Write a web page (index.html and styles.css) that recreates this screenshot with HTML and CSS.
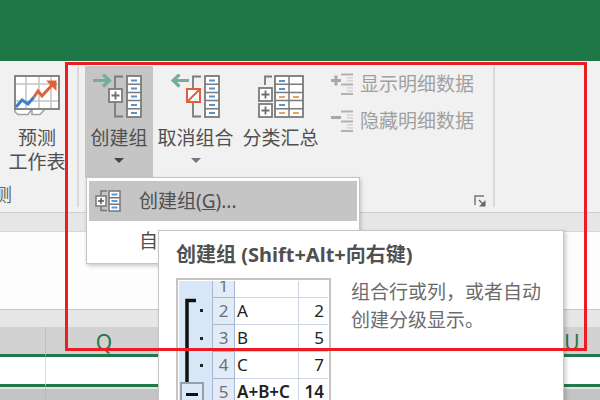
FILE: index.html
```html
<!DOCTYPE html>
<html lang="zh-CN">
<head>
    <meta charset="UTF-8">
    <meta name="viewport" content="width=device-width, initial-scale=1.0">
    <title>创建组</title>
    <link rel="stylesheet" href="styles.css">
</head>
<body>

<svg class="defs" width="0" height="0">
    <defs>
        <g id="list">
            <path d="M22 17V2.500H30M22 29V42.500H30" fill="none" stroke="#7a7a7a" stroke-width="1.800"/>
            <rect x="34" y="2" width="14" height="41" fill="#fff" stroke="#7a7a7a" stroke-width="1.800"/>
            <path d="M34 10.200H48M34 18.400H48M34 26.600H48M34 34.800H48" stroke="#7a7a7a" stroke-width="1.500"/>
            <path d="M38 6.500H44M38 14.500H44M38 22.500H44M38 31H44M38 39H44" stroke="#5a90cc" stroke-width="2"/>
        </g>
        <g id="plus">
            <rect x="1" y="1" width="13" height="13" fill="#fff" stroke="#7a7a7a" stroke-width="1.800"/>
            <path d="M3.500 7.500H11.500M7.500 3.500V11.500" stroke="#6e6e6e" stroke-width="1.800"/>
        </g>
        <g id="rows">
            <path d="M10 1.500H22M10 11.500H22M10 21H22" stroke="#b4b0b4" stroke-width="2"/>
            <path d="M16 5H22M16 8H22M16 15H22M16 18H22" stroke="#d6d0d6" stroke-width="1.500"/>
        </g>
    </defs>
</svg>

<header class="titlebar"></header>

<div class="ribbon">
    <section class="group forecast">
        <button class="big">
            <svg width="46" height="44" viewBox="0 0 46 44">
                <path d="M1 34V38L4 40.500H14L18 35M18 35V40.500H26L32 34" fill="#fff" stroke="#a0a0a0" stroke-width="1.500"/>
                <rect x="1" y="2" width="44" height="33" fill="#fff" stroke="#7a7a7a" stroke-width="1.800"/>
                <path d="M12 3V34M25 3V34M37 3V34M2 10H44M2 27H44" stroke="#c4c4c4" stroke-width="1.500"/>
                <path d="M2 33L8 26L14 30L20 23" fill="none" stroke="#3f7fc4" stroke-width="3"/>
                <path d="M20 23L24 17L28 22L39 10" fill="none" stroke="#dc6238" stroke-width="3"/>
                <path d="M32 6.500H42.500V17L38.500 13L35 9.500Z" fill="#dc6238"/>
            </svg>
            <span class="label">预测<br>工作表</span>
        </button>
        <div class="group-name">预测</div>
    </section>

    <section class="group outline">
        <div class="dropdown">
            <button class="big active">
                <svg width="52" height="44" viewBox="0 0 52 44">
                    <use href="#list"/>
                    <path d="M0 6.500H15M10 0.500L16.500 6.500L10 12.500" fill="none" stroke="#74ad98" stroke-width="3.200"/>
                    <use href="#plus" x="15" y="14"/>
                </svg>
                <span class="label">创建组</span>
                <span class="caret"></span>
            </button>
            <div class="menu">
                <button class="menu-item selected">
                    <svg width="26" height="22" viewBox="0 0 26 22">
                        <path d="M6 7V1H12M6 16V20.500H12" fill="none" stroke="#777" stroke-width="1.500"/>
                        <rect x="14" y="1" width="11" height="20" fill="#fff" stroke="#777" stroke-width="1.500"/>
                        <path d="M14 7.700H25M14 14.300H25" stroke="#777" stroke-width="1.500"/>
                        <path d="M16.500 4.500H22.500M16.500 11H22.500M16.500 17.500H22.500" stroke="#5b9bd5" stroke-width="2"/>
                        <rect x="1" y="6" width="10" height="10" fill="#fff" stroke="#777" stroke-width="1.500"/>
                        <path d="M3 11H9M6 8V14" stroke="#555" stroke-width="1.500"/>
                    </svg>
                    <span>创建组(<u>G</u>)...</span>
                </button>
                <button class="menu-item">
                    <svg width="26" height="22"></svg>
                    <span>自动建立分级显示(<u>A</u>)</span>
                </button>
                <div class="tooltip">
                    <h2>创建组 (Shift+Alt+向右键)</h2>
                    <div class="tooltip-body">
                        <div class="sample">
                            <svg width="33" height="124" viewBox="0 0 33 124">
                                <path d="M17 19.500H8V101" fill="none" stroke="#111" stroke-width="3.500"/>
                                <rect x="21" y="28" width="3" height="3" fill="#222"/>
                                <rect x="21" y="56" width="3" height="3" fill="#222"/>
                                <rect x="21" y="83" width="3" height="3" fill="#222"/>
                                <rect x="2" y="102" width="22" height="24" fill="#dce9f8" stroke="#9a9fa8" stroke-width="2"/>
                                <path d="M7 113.500H19" stroke="#111" stroke-width="3"/>
                            </svg>
                            <table>
                                <tr class="cut"><th><div>1</div></th><td></td><td></td></tr>
                                <tr><th>2</th><td>A</td><td class="num">2</td></tr>
                                <tr><th>3</th><td>B</td><td class="num">5</td></tr>
                                <tr><th>4</th><td>C</td><td class="num">7</td></tr>
                                <tr class="total"><th>5</th><td>A+B+C</td><td class="num">14</td></tr>
                            </table>
                        </div>
                        <p>组合行或列，或者自动创建分级显示。</p>
                    </div>
                </div>
            </div>
        </div>
        <button class="big wide">
            <svg width="50" height="44" viewBox="0 0 50 44">
                <use href="#list"/>
                <path d="M18 6.500H2M8.500 0.500L2 6.500L8.500 12.500" fill="none" stroke="#74ad98" stroke-width="3.200"/>
                <rect x="16" y="15" width="13" height="13" fill="#fff" stroke="#dc6238" stroke-width="2"/>
                <path d="M16 28L29 15" stroke="#dc6238" stroke-width="2"/>
            </svg>
            <span class="label">取消组合</span>
            <span class="caret light"></span>
        </button>
        <button class="big wide">
            <svg width="48" height="44" viewBox="0 0 48 44">
                <path d="M8 11V2.500H15" fill="none" stroke="#7a7a7a" stroke-width="1.800"/>
                <rect x="18" y="2" width="28" height="41" fill="#fff" stroke="#7a7a7a" stroke-width="1.800"/>
                <path d="M18 10.200H46M18 18.400H46M18 26.600H46M18 34.800H46M32 2V43" stroke="#7a7a7a" stroke-width="1.500"/>
                <path d="M22 7H28M22 15H28M22 31H28" stroke="#5a90cc" stroke-width="2"/>
                <path d="M22 23H28M36 23H42M22 39H28M36 39H42" stroke="#eb9f60" stroke-width="2"/>
                <use href="#plus" x="1" y="13"/>
                <use href="#plus" x="1" y="29"/>
            </svg>
            <span class="label">分类汇总</span>
        </button>
        <div class="small-buttons">
            <button disabled>
                <svg width="22" height="23" viewBox="0 0 22 23">
                    <use href="#rows"/>
                    <path d="M0 7.500H10M5 2.500V12.500" stroke="#a9a5a9" stroke-width="3"/>
                </svg>
                显示明细数据
            </button>
            <button disabled>
                <svg width="22" height="23" viewBox="0 0 22 23">
                    <use href="#rows"/>
                    <path d="M0 7.500H10" stroke="#a9a5a9" stroke-width="3"/>
                </svg>
                隐藏明细数据
            </button>
        </div>
        <button class="launcher" aria-label="分级显示设置">
            <svg width="12" height="12" viewBox="0 0 12 12">
                <path d="M1 10V1H10" fill="none" stroke="#777" stroke-width="1.500"/>
                <path d="M5 5L9 9" stroke="#666" stroke-width="1.500"/>
                <path d="M11.500 5V11.500H5Z" fill="#666"/>
            </svg>
        </button>
    </section>
</div>

<div class="formula-bar"></div>

<main class="sheet">
    <table>
        <tr class="columns"><th class="first"></th><th>Q</th><th>R</th><th>S</th><th>T</th><th>U</th></tr>
        <tr class="current"><td></td><td></td><td></td><td></td><td></td><td></td></tr>
        <tr class="filled"><td></td><td></td><td></td><td></td><td></td><td></td></tr>
    </table>
</main>

<div class="highlight"></div>

</body>
</html>
```
FILE: styles.css
```css
* {
    box-sizing: border-box;
}
body {
    margin: 0;
    height: 100vh;
    overflow: hidden;
    position: relative;
    display: flex;
    flex-direction: column;
    font-family: "Noto Sans", "Noto Sans CJK SC", sans-serif;
    font-size: 19px;
    line-height: 24px;
    color: #505050;
    background-color: #c4c4c4;
}
.defs {
    position: absolute;
}
button {
    font: inherit;
    color: inherit;
    background: none;
    border: 0;
    padding: 0;
    margin: 0;
    white-space: nowrap;
}
svg {
    display: block;
    flex-shrink: 0;
}
.titlebar {
    flex-shrink: 0;
    height: 61px;
    background-color: #1f7747;
}

/* ribbon */
.ribbon {
    display: flex;
    flex-shrink: 0;
    height: 152px;
    padding: 5px 0;
    background-color: #f1f1f1;
    border-bottom: 1px solid #cfcfcf;
}
.group {
    display: flex;
    border-right: 2px solid #dadada;
}
.forecast {
    flex-direction: column;
    justify-content: space-between;
    width: 79px;
}
.group-name {
    margin-left: -26px;
    color: #666;
}
.outline {
    width: 416px;
    padding-left: 6px;
    align-items: flex-start;
}
.big {
    display: flex;
    flex-direction: column;
    align-items: center;
    gap: 8px;
    width: 68px;
    height: 112px;
    padding-top: 8px;
}
.forecast .big {
    width: 74px;
}
.wide {
    width: 85px;
}
.active {
    background-color: #c5c5c5;
}
.caret {
    border: 5px solid transparent;
    border-top-color: #444;
    border-bottom: 0;
}
.light {
    border-top-color: #777;
}
.small-buttons {
    display: flex;
    flex-direction: column;
    gap: 13px;
    padding: 6px 0 0 8px;
    color: #a0a0a0;
}
.small-buttons button {
    display: flex;
    align-items: center;
    gap: 7px;
    height: 24px;
}
.launcher {
    align-self: flex-end;
}

/* drop-down menu */
.dropdown {
    position: relative;
}
.menu {
    position: absolute;
    z-index: 2;
    top: 111px;
    left: 1px;
    width: 274px;
    padding: 3px 2px 2px;
    background-color: #fff;
    border: 1px solid #c3c3c3;
    box-shadow: 1px 2px 4px rgba(0, 0, 0, 0.2);
}
.menu-item {
    display: flex;
    align-items: center;
    gap: 18px;
    width: 100%;
    height: 40px;
    padding-left: 6px;
}
.selected {
    background-color: #c5c5c5;
}

/* tooltip */
.tooltip {
    position: absolute;
    top: 52px;
    left: 71px;
    width: 406px;
    padding: 12px 16px 16px 17px;
    background-color: #fff;
    border: 1px solid #c6c6c6;
    box-shadow: 2px 2px 4px rgba(0, 0, 0, 0.2);
}
.tooltip h2 {
    margin: 0 0 11px;
    font-size: 20px;
    font-weight: bold;
}
.tooltip-body {
    display: flex;
    align-items: flex-start;
    gap: 20px;
    color: #6c6c6c;
}
.tooltip p {
    flex: 1;
    margin: 0;
    line-height: 28px;
}
.sample {
    display: flex;
    align-items: flex-start;
    padding: 1px;
    border: 2px solid #c4c4c4;
}
.sample > svg {
    background-color: #d7e7f8;
}
.sample table {
    width: 116px;
    table-layout: fixed;
    border-collapse: collapse;
    font-size: 17px;
    line-height: 26px;
    color: #222;
}
.sample tr {
    height: 27px;
}
.sample .cut {
    height: 16px;
}
.cut div {
    height: 15px;
    overflow: hidden;
    line-height: 10px;
}
.sample th {
    width: 22px;
    padding: 0;
    font-weight: normal;
    color: #66727c;
    background-color: #e3ebf6;
    border: 1px solid #a5b9d3;
    border-top: 0;
}
.sample td {
    padding: 0 2px;
    border-bottom: 1px solid #ccd5e6;
    white-space: nowrap;
}
.sample td:last-child {
    width: 30px;
    padding: 0 4px;
    border-left: 1px solid #ccd5e6;
}
.sample .num {
    text-align: right;
}
.total td {
    font-weight: 600;
}

/* worksheet */
.formula-bar {
    flex-shrink: 0;
    height: 114px;
    border: solid #e6e6e6;
    border-width: 18px 0 17px;
    background-color: #fdfdfd;
    box-shadow: inset 0 1px #d6d6d6, inset 0 -1px #c8c8c8;
}
.sheet {
    flex: 1;
    min-height: 0;
    overflow: hidden;
}
.sheet table {
    width: 631px;
    table-layout: fixed;
    border-collapse: separate;
    border-spacing: 0;
}
.sheet th,
.sheet td {
    padding: 0;
    border-right: 1px solid #c0c0c0;
    border-bottom: 3px solid #23794a;
}
.columns th {
    height: 30px;
    padding-top: 3px;
    font-size: 21px;
    line-height: 24px;
    font-weight: normal;
    color: #23794a;
    background-color: #d2d2d2;
}
.columns .first {
    width: 46px;
}
.sheet .current td {
    height: 30px;
    background-color: #fff;
    border-right-color: #ddd;
}
.sheet .filled td {
    height: 27px;
    border-top: 2px solid #dbe8df;
    border-right-color: #b8b8b8;
    border-bottom: 0;
    background-color: #c4c4c4;
}

/* red frame around the outline commands */
.highlight {
    position: absolute;
    z-index: 3;
    top: 62px;
    left: 65px;
    width: 522px;
    height: 289px;
    border: 3px solid #ec1c24;
    pointer-events: none;
}
```
